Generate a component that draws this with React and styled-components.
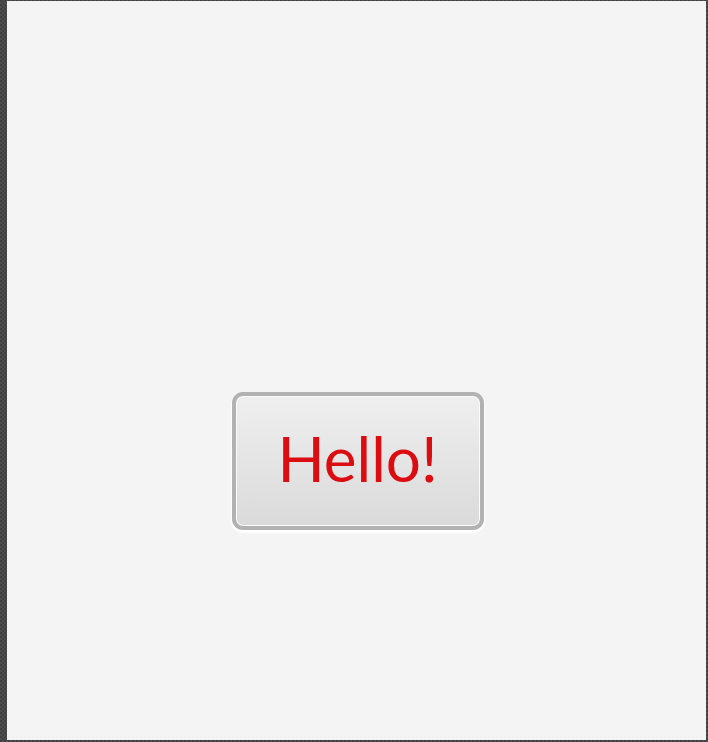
import React from "react";
import styled, { createGlobalStyle } from "styled-components";

const frame = `#474747`;
const page = `#f4f4f4`;
const red = `#dc0d10`;

const GlobalStyle = createGlobalStyle`
  html, body, #root {
    margin: 0;
    height: 100%;
  }
  body {
    background-color: ${frame};
    background-image: repeating-conic-gradient(#4e4e4e 0 25%, #404040 0 50%);
    background-size: 4px 4px;
    font-family: "Lato", "Noto Sans", sans-serif;
  }
`;

const Frame = styled.div`
  box-sizing: border-box;
  height: calc(100% - 3px);
  margin: 1px 2px 2px 7px;
  background: ${page};
  display: flex;
  flex-direction: column;
  align-items: center;
  padding-top: 391px;
`;

const Button = styled.button`
  box-sizing: border-box;
  width: 252px;
  height: 138px;
  margin-left: 2px;
  border: 4px solid #b2b2b2;
  border-radius: 11px;
  background: linear-gradient(#efefef, #dadada);
  box-shadow: inset 0 0 0 1px #fbfbfb, 0 2px 2px 1px #ffffff;
  color: ${red};
  font-family: "Lato", "Noto Sans", sans-serif;
  font-size: 62px;
  font-weight: 400;
  padding: 0 0 6px;
  cursor: pointer;
`;

const App = () => (
  <>
    <GlobalStyle />
    <Frame>
      <Button>Hello!</Button>
    </Frame>
  </>
);

export default App;
